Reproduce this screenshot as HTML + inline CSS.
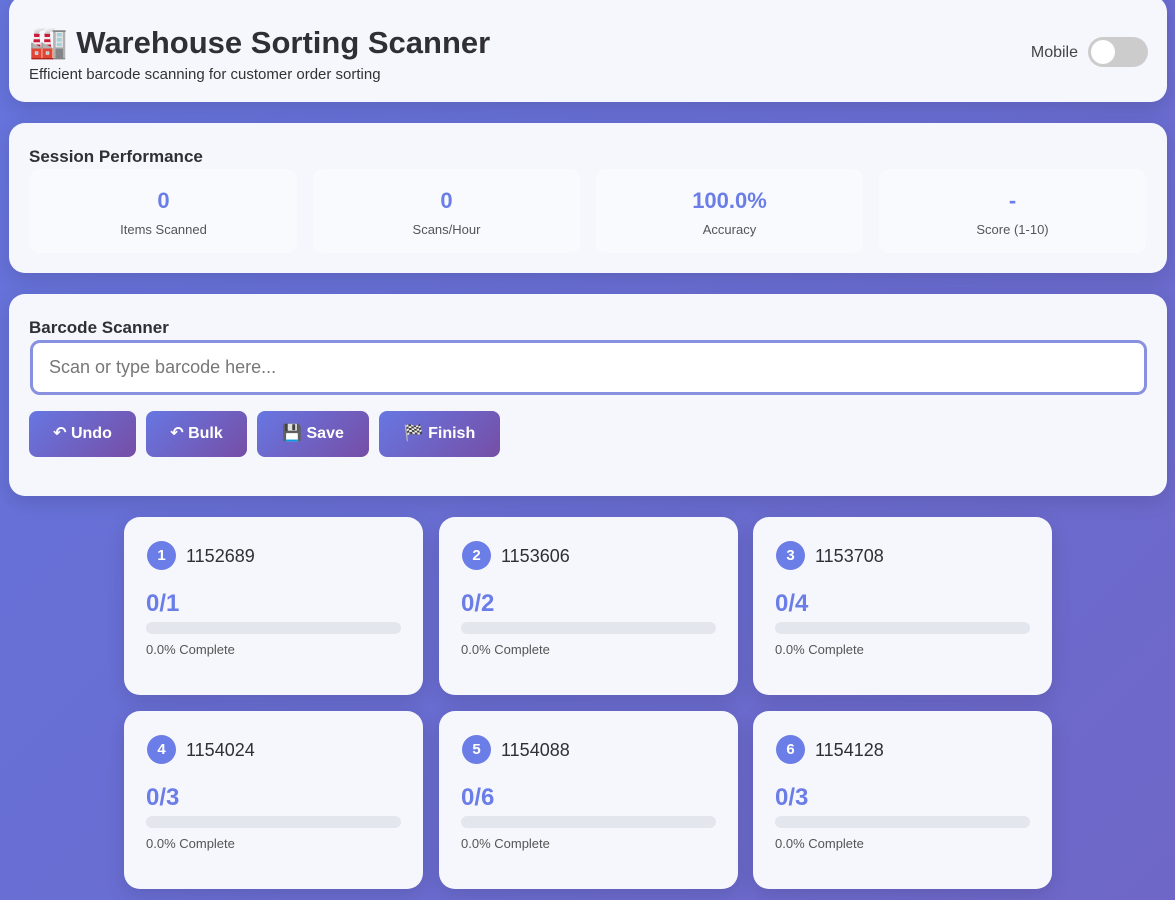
<!DOCTYPE html><html><head><meta charset="utf-8"><style>
*{box-sizing:border-box;margin:0;padding:0}
body{width:1175px;height:900px;overflow:hidden;background:linear-gradient(135deg,#6574dc,#6a6cd0 60%,#6f67c8);font-family:"Liberation Sans","DejaVu Sans",sans-serif;color:#333;position:relative}
.card{position:absolute;background:#f6f7fd;border-radius:16px;box-shadow:0 6px 20px rgba(0,0,0,.12)}
h1{position:absolute;left:20px;font-size:31px;font-weight:bold;color:#2f2f35}
.sub{position:absolute;left:20px;font-size:15px;color:#333}
.tog{position:absolute;right:19px;width:60px;height:30px;border-radius:15px;background:#ccc}
.tog:after{content:"";position:absolute;left:3px;top:3px;width:24px;height:24px;border-radius:50%;background:#fff}
h3{position:absolute;left:20px;font-size:17px;font-weight:bold;color:#2f2f35}
.stat{position:absolute;top:46px;width:267px;height:84px;background:#f9fafe;border-radius:10px;text-align:center}
.stat b{display:block;margin-top:19px;font-size:22px;color:#6b7de6}
.stat span{display:block;margin-top:8px;font-size:13px;color:#555}
.inp{position:absolute;left:21px;top:46px;width:1117px;height:55px;border:3px solid #8791e0;border-radius:10px;background:#fff;font-size:18px;color:#777;padding:14px 16px}
.btn{position:absolute;top:117px;height:46px;border-radius:8px;background:linear-gradient(135deg,#6777e2,#764ea6);color:#fff;font-weight:bold;font-size:16px;text-align:center;line-height:46px}
.o{width:299px;height:178px}
.num{position:absolute;left:23px;top:24px;width:29px;height:29px;border-radius:50%;background:#6b7de6;color:#fff;font-weight:bold;font-size:15px;text-align:center;line-height:29px}
.id{position:absolute;left:62px;top:29px;font-size:18px;color:#2f2f35}
.cnt{position:absolute;left:22px;top:73px;font-size:24px;font-weight:bold;color:#6b7de6}
.bar{position:absolute;left:22px;top:105px;width:255px;height:12px;border-radius:6px;background:#e4e6ee}
.pc{position:absolute;left:22px;top:125px;font-size:13px;color:#555}
</style></head><body>
<div class="card" style="left:9px;top:-4px;width:1158px;height:106px">
<h1 style="top:28px">🏭 Warehouse Sorting Scanner</h1>
<div class="sub" style="top:70px">Efficient barcode scanning for customer order sorting</div>
<div style="position:absolute;right:89px;top:48px;font-size:16px;color:#444">Mobile</div>
<div class="tog" style="top:41px"></div>
</div>
<div class="card" style="left:9px;top:123px;width:1158px;height:150px">
<h3 style="top:24px">Session Performance</h3>
<div class="stat" style="left:21px"><b>0</b><span>Items Scanned</span></div>
<div class="stat" style="left:304px"><b>0</b><span>Scans/Hour</span></div>
<div class="stat" style="left:587px"><b>100.0%</b><span>Accuracy</span></div>
<div class="stat" style="left:870px"><b>-</b><span>Score (1-10)</span></div>
</div>
<div class="card" style="left:9px;top:294px;width:1158px;height:202px">
<h3 style="top:24px">Barcode Scanner</h3>
<div class="inp">Scan or type barcode here...</div>
<div class="btn" style="left:20px;width:107px">↶ Undo</div>
<div class="btn" style="left:137px;width:101px">↶ Bulk</div>
<div class="btn" style="left:248px;width:112px">💾 Save</div>
<div class="btn" style="left:370px;width:121px">🏁 Finish</div>
</div>
<div class="card o" style="left:124px;top:517px"><div class="num">1</div><div class="id">1152689</div><div class="cnt">0/1</div><div class="bar"></div><div class="pc">0.0% Complete</div></div>
<div class="card o" style="left:439px;top:517px"><div class="num">2</div><div class="id">1153606</div><div class="cnt">0/2</div><div class="bar"></div><div class="pc">0.0% Complete</div></div>
<div class="card o" style="left:753px;top:517px"><div class="num">3</div><div class="id">1153708</div><div class="cnt">0/4</div><div class="bar"></div><div class="pc">0.0% Complete</div></div>
<div class="card o" style="left:124px;top:711px"><div class="num">4</div><div class="id">1154024</div><div class="cnt">0/3</div><div class="bar"></div><div class="pc">0.0% Complete</div></div>
<div class="card o" style="left:439px;top:711px"><div class="num">5</div><div class="id">1154088</div><div class="cnt">0/6</div><div class="bar"></div><div class="pc">0.0% Complete</div></div>
<div class="card o" style="left:753px;top:711px"><div class="num">6</div><div class="id">1154128</div><div class="cnt">0/3</div><div class="bar"></div><div class="pc">0.0% Complete</div></div>
</body></html>
